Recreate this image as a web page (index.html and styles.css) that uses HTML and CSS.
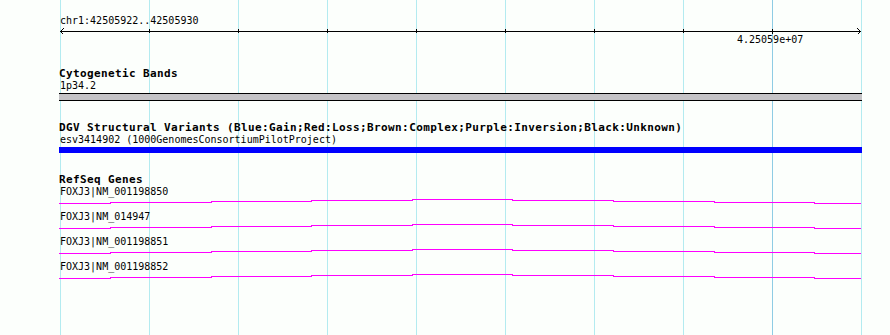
FILE: index.html
```html
<!DOCTYPE html>
<html lang="en">

<head>
    <meta charset="UTF-8">
    <meta name="viewport" content="width=device-width, initial-scale=1.0">
    <title>Genome View</title>
    <link rel="stylesheet" href="styles.css">
</head>

<body>

    <div class="view">
        <!-- ruler -->
        <div class="ruler">
            <div class="locus">chr1:42505922..42505930</div>
            <svg class="axis" width="803" height="7" viewBox="59 27 803 7">
                <line x1="60" y1="31.5" x2="861" y2="31.5" />
                <path d="M149.5 29V33 M238.5 29V33 M327.5 29V33 M416.5 29V33 M505.5 29V33 M594.5 29V33 M683.5 29V33 M772.5 29V34" />
                <polyline points="64,28 60.5,31.5 64,35" />
                <polyline points="857,28 860.5,31.5 857,35" />
            </svg>
            <div class="tick-label">4.25059e+07</div>
        </div>

        <section class="track">
            <h2 class="track-title">Cytogenetic Bands</h2>
            <div class="feature-label">1p34.2</div>
            <div class="band"></div>
        </section>

        <section class="track">
            <h2 class="track-title">DGV Structural Variants (Blue:Gain;Red:Loss;Brown:Complex;Purple:Inversion;Black:Unknown)</h2>
            <div class="feature-label">esv3414902 (1000GenomesConsortiumPilotProject)</div>
            <div class="variant"></div>
        </section>

        <section class="track">
            <h2 class="track-title">RefSeq Genes</h2>
            <div class="gene">
                <div class="feature-label">FOXJ3|NM_001198850</div>
                <svg class="gene-line" width="803" height="13" viewBox="59 0 803 13">
                    <path d="M59 5.5H110V4.5H211V3.5H311V2.5H412V1.5H512V2.5H613V3.5H714V4.5H814V5.5H861" />
                </svg>
            </div>
            <div class="gene">
                <div class="feature-label">FOXJ3|NM_014947</div>
                <svg class="gene-line" width="803" height="13" viewBox="59 0 803 13">
                    <path d="M59 5.5H110V4.5H211V3.5H311V2.5H412V1.5H512V2.5H613V3.5H714V4.5H814V5.5H861" />
                </svg>
            </div>
            <div class="gene">
                <div class="feature-label">FOXJ3|NM_001198851</div>
                <svg class="gene-line" width="803" height="13" viewBox="59 0 803 13">
                    <path d="M59 5.5H110V4.5H211V3.5H311V2.5H412V1.5H512V2.5H613V3.5H714V4.5H814V5.5H861" />
                </svg>
            </div>
            <div class="gene">
                <div class="feature-label">FOXJ3|NM_001198852</div>
                <svg class="gene-line" width="803" height="13" viewBox="59 0 803 13">
                    <path d="M59 5.5H110V4.5H211V3.5H311V2.5H412V1.5H512V2.5H613V3.5H714V4.5H814V5.5H861" />
                </svg>
            </div>
        </section>
    </div>

</body>

</html>
```

FILE: styles.css
```css
body {
    margin: 0;
    padding: 0;
    background-color: #fcfffc;
    font-family: "DejaVu Sans Mono", "Liberation Mono", monospace;
    font-size: 10px;
    line-height: 12px;
    color: #000;
}

/* grid lines every 89px, the darker one marks the labelled tick */
.view {
    box-sizing: border-box;
    width: 890px;
    height: 335px;
    padding: 15px 0 0 59px;
    overflow: hidden;
    background:
        linear-gradient(to right, #8ecce4 0 1px, transparent 1px) 772px 0 / 1px 100% no-repeat,
        linear-gradient(to right, #b3ebf0 0 1px, transparent 1px) 60px 0 / 89px 100% repeat-x;
}

.locus {
    padding-left: 1px;
}

.axis {
    display: block;
    fill: none;
    stroke: #000;
    stroke-width: 1;
    shape-rendering: crispEdges;
}

.axis polyline {
    shape-rendering: auto;
}

.tick-label {
    padding-left: 678px;
}

.track {
    margin-top: 22px;
}

.track + .track {
    margin-top: 21px;
}

.track-title {
    margin: 0;
    font-size: 11px;
    font-weight: bold;
    line-height: 12px;
    letter-spacing: 0.38px;
    white-space: nowrap;
}

.feature-label {
    padding-left: 1px;
    white-space: nowrap;
}

.band {
    width: 803px;
    height: 6px;
    margin-top: 1px;
    border-top: 1px solid #000;
    border-bottom: 1px solid #000;
    background-color: #c4c3c6;
}

.variant {
    width: 803px;
    height: 6px;
    margin-top: 1px;
    background-color: #0000ff;
}

.gene-line {
    display: block;
    fill: none;
    stroke: #ff00ff;
    stroke-width: 1;
    shape-rendering: crispEdges;
}
```
